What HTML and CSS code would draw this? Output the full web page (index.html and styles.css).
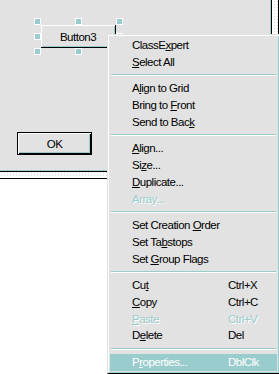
FILE: index.html
```html
<!DOCTYPE html>
<html lang="en">
<head>
    <meta charset="UTF-8">
    <title>Dialog Editor - Context Menu</title>
    <link rel="stylesheet" href="styles.css">
</head>
<body>
    <div class="screen">
        <div class="frame">
            <div class="dialog">
                <div class="control button3">Button3</div>
                <span class="handle" style="left: 34px; top: 18px;"></span>
                <span class="handle" style="left: 75px; top: 18px;"></span>
                <span class="handle" style="left: 116px; top: 18px;"></span>
                <span class="handle" style="left: 34px; top: 33px;"></span>
                <span class="handle" style="left: 116px; top: 33px;"></span>
                <span class="handle" style="left: 34px; top: 48px;"></span>
                <span class="handle" style="left: 75px; top: 48px;"></span>
                <div class="control ok">OK</div>
            </div>
        </div>

        <div class="menu">
            <div class="item"><span>ClassE<u>x</u>pert</span></div>
            <div class="item"><span><u>S</u>elect All</span></div>
            <div class="sep"></div>
            <div class="item"><span>A<u>l</u>ign to Grid</span></div>
            <div class="item"><span>Bring to <u>F</u>ront</span></div>
            <div class="item"><span>Send to Bac<u>k</u></span></div>
            <div class="sep"></div>
            <div class="item"><span><u>A</u>lign...</span></div>
            <div class="item"><span>Si<u>z</u>e...</span></div>
            <div class="item"><span><u>D</u>uplicate...</span></div>
            <div class="item disabled"><span>Arra<u>y</u>...</span></div>
            <div class="sep"></div>
            <div class="item"><span>Set Creation <u>O</u>rder</span></div>
            <div class="item"><span>Set Ta<u>b</u>stops</span></div>
            <div class="item"><span>Set <u>G</u>roup Flags</span></div>
            <div class="sep"></div>
            <div class="item"><span>Cu<u>t</u></span><span>Ctrl+X</span></div>
            <div class="item"><span><u>C</u>opy</span><span>Ctrl+C</span></div>
            <div class="item disabled"><span><u>P</u>aste</span><span>Ctrl+V</span></div>
            <div class="item"><span>D<u>e</u>lete</span><span>Del</span></div>
            <div class="sep"></div>
            <div class="item active"><span>P<u>r</u>operties...</span><span>DblClk</span></div>
        </div>
    </div>
</body>
</html>
```

FILE: styles.css
```css
body {
    margin: 0;
    background: #fff;
    font-family: "Liberation Sans", Arial, sans-serif;
    font-size: 11.5px;
    letter-spacing: -0.5px;
    color: #000;
}
.screen {
    position: relative;
    width: 279px;
    height: 374px;
    overflow: hidden;
}

/* dialog being edited, with its hatched sizing frame */
.frame {
    box-sizing: border-box;
    width: 279px;
    height: 179px;
    padding: 0 6px 6px 0;
    border-right: 1px solid #000;
    border-bottom: 1px solid #000;
    background-color: #fff;
    background-image: radial-gradient(#dadada 0.6px, transparent 0.7px);
    background-size: 3px 3px;
}
.dialog {
    position: relative;
    box-sizing: border-box;
    height: 100%;
    background: #e2e2e2;
    border-right: 1px solid #000;
    border-bottom: 1px solid #000;
    box-shadow: inset -1px -1px 0 #99cccc;
}
.control {
    position: absolute;
    box-sizing: border-box;
    width: 75px;
    height: 23px;
    display: flex;
    align-items: center;
    justify-content: center;
}
.button3 {
    left: 41px;
    top: 25px;
    border-right: 1px solid #000;
    border-bottom: 1px solid #000;
    box-shadow: inset 1px 1px 0 #fff, inset -1px -1px 0 #99cccc;
    padding-top: 1px;
}
.ok {
    left: 17px;
    top: 132px;
    border: 1px solid #000;
    box-shadow: inset 1px 1px 0 #fff, inset -1px -1px 0 #000, inset -2px -2px 0 #99cccc;
}
.handle {
    position: absolute;
    box-sizing: border-box;
    width: 7px;
    height: 7px;
    background: #99cccc;
    border: 1px solid #fff;
}

/* popup menu */
.menu {
    position: absolute;
    left: 107px;
    top: 34px;
    box-sizing: border-box;
    width: 173px;
    height: 340px;
    padding: 2px;
    background: #e2e2e2;
    border: 1px solid;
    border-color: #e2e2e2 #000 #000 #e2e2e2;
    box-shadow: inset 1px 1px 0 #fff, inset -1px -1px 0 #99cccc;
}
.item {
    display: grid;
    grid-template-columns: 96px 1fr;
    height: 16.7px;
    line-height: 16.7px;
    padding-left: 22px;
    white-space: nowrap;
}
.item.disabled {
    color: #99cccc;
    text-shadow: 1px 1px 0 #fff;
}
.item.active {
    background: #99cccc;
    color: #fff;
}
.sep {
    margin: 4px 1px;
    border-top: 1px solid #99cccc;
    border-bottom: 1px solid #fff;
}
```
